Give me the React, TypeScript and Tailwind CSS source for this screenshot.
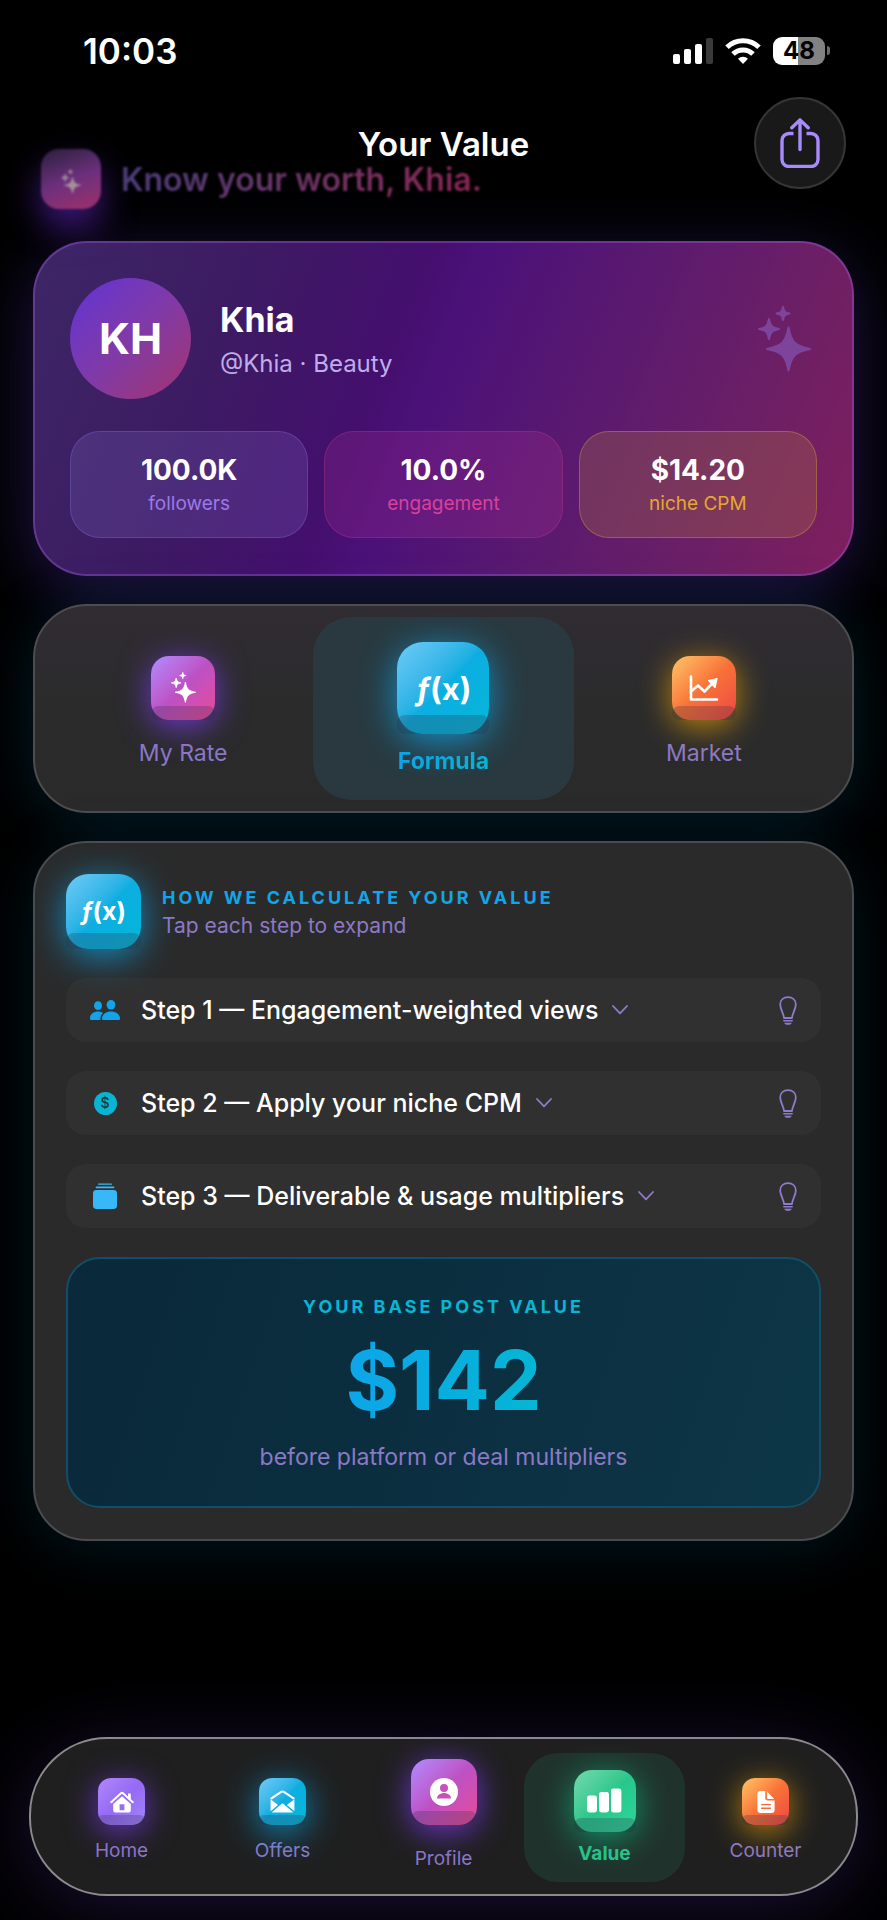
import type { ReactNode } from "react";
import clsx from "clsx";

const star = (x: number, y: number, r: number) =>
  [
    `M${x} ${y - r}`,
    `C${x + r * 0.14} ${y - r * 0.3} ${x + r * 0.3} ${y - r * 0.14} ${x + r} ${y}`,
    `C${x + r * 0.3} ${y + r * 0.14} ${x + r * 0.14} ${y + r * 0.3} ${x} ${y + r}`,
    `C${x - r * 0.14} ${y + r * 0.3} ${x - r * 0.3} ${y + r * 0.14} ${x - r} ${y}`,
    `C${x - r * 0.3} ${y - r * 0.14} ${x - r * 0.14} ${y - r * 0.3} ${x} ${y - r}Z`,
  ].join("");

function Sparkles({ className }: { className?: string }) {
  return (
    <svg viewBox="0 0 53 66" fill="currentColor" stroke="currentColor" strokeWidth="2" strokeLinejoin="round" className={className} aria-hidden="true">
      <path d={star(30.5, 43, 21.5)} />
      <path d={star(11, 23, 10)} />
      <path d={star(25, 7.5, 6.5)} />
    </svg>
  );
}

function TrendIcon() {
  return (
    <svg viewBox="0 0 30 26" className="w-[30px]" fill="none" stroke="white" strokeWidth="2.6" strokeLinecap="round" strokeLinejoin="round" aria-hidden="true">
      <path d="M2 1.5V24.5H28" />
      <path d="M2.5 16L9 10.5L15.5 16.5L24 7.5" />
      <path d="M19.5 5.5L28 3.5L26 12.5Z" fill="white" strokeWidth="1.2" />
    </svg>
  );
}

function HomeIcon() {
  return (
    <svg viewBox="0 0 24 22" className="w-6" aria-hidden="true">
      <path d="M1.2 11.2L11 2.3a1.5 1.5 0 0 1 2 0L22.8 11.2" fill="none" stroke="white" strokeWidth="2" strokeLinecap="round" />
      <path d="M18 2.5h2.8v6l-2.8-2.6z" fill="white" />
      <path
        fillRule="evenodd"
        d="M12 5.2L20.8 13v6.5a2 2 0 0 1-2 2H5.2a2 2 0 0 1-2-2V13zM9.6 13.2v6h4.8v-6z"
        fill="white"
      />
    </svg>
  );
}

function MailIcon() {
  return (
    <svg viewBox="0 0 26 24" className="w-[25px]" aria-hidden="true">
      <path d="M1.5 8.6L11.6 2a2.6 2.6 0 0 1 2.8 0L24.5 8.6" fill="none" stroke="white" strokeWidth="2.2" strokeLinecap="round" />
      <path d="M.6 9.5L8.4 15.5L.6 22zM25.4 9.5L17.6 15.5L25.4 22z" fill="white" />
      <path d="M1.6 23.4L12.2 14.4a1.3 1.3 0 0 1 1.6 0L24.4 23.4z" fill="white" />
    </svg>
  );
}

function PersonIcon() {
  return (
    <svg viewBox="0 0 28 28" className="w-7" aria-hidden="true">
      <circle cx="14" cy="14" r="14" fill="white" />
      <circle cx="14" cy="10" r="4" fill="#c553bb" />
      <path d="M7 20.6c0-3.4 3.4-5.6 7-5.6s7 2.2 7 5.6z" fill="#cb50b4" />
    </svg>
  );
}

function BarsIcon() {
  return (
    <svg viewBox="0 0 35 25" className="w-[35px]" fill="white" aria-hidden="true">
      <rect x="0" y="7.5" width="10" height="17" rx="2.4" />
      <rect x="12" y="4" width="10" height="20.5" rx="2.4" />
      <rect x="24" y="0.5" width="10.4" height="24" rx="2.4" />
    </svg>
  );
}

function DocIcon() {
  return (
    <svg viewBox="0 0 18 22" className="w-[18px]" aria-hidden="true">
      <path d="M3.4 0H8.2V7.2a2.4 2.4 0 0 0 2.4 2.4H17.6V19a3 3 0 0 1-3 3H3.4a3 3 0 0 1-3-3V3a3 3 0 0 1 3-3z" fill="white" />
      <path d="M10 .6L17.2 8H11a1 1 0 0 1-1-1z" fill="white" />
      <path d="M4.6 13.6h8.8M4.6 17.2h8.8" stroke="#f56a3c" strokeWidth="1.4" strokeLinecap="round" />
    </svg>
  );
}

function PeopleIcon() {
  return (
    <svg viewBox="0 0 30 20" className="w-[30px]" fill="#12a3ea" aria-hidden="true">
      <ellipse cx="8" cy="5.7" rx="4" ry="4.4" />
      <path d="M0 18.2c0-4 3.6-6.6 8-6.6 2 0 3.8.6 5 1.4-1.6 1.6-2.6 3.6-2.6 5.8v1.2H1.2C.5 20 0 19.4 0 18.2z" />
      <ellipse cx="21" cy="4.8" rx="4.4" ry="4.8" />
      <path d="M12 18.4c0-4.2 4.2-7 9-7s9 2.8 9 7c0 1-.5 1.6-1.4 1.6H13.4c-.9 0-1.4-.6-1.4-1.6z" />
    </svg>
  );
}

function DollarIcon() {
  return (
    <span className="flex size-[23px] items-center justify-center rounded-full bg-[#08b4d3] text-sm leading-none font-medium text-[#26333a]">
      $
    </span>
  );
}

function StackIcon() {
  return (
    <svg viewBox="0 0 24 26" className="w-6" fill="#38b8f8" aria-hidden="true">
      <rect x="5" y="0.5" width="14" height="1.3" rx=".6" />
      <rect x="2.6" y="3.6" width="18.8" height="1.6" rx=".8" />
      <rect x="0" y="7" width="24" height="19" rx="3.4" />
    </svg>
  );
}

function ChevronIcon() {
  return (
    <svg viewBox="0 0 16 10" className="w-4" fill="none" stroke="#8f7bc9" strokeWidth="1.8" strokeLinecap="round" strokeLinejoin="round" aria-hidden="true">
      <path d="M1 1L8 8.4L15 1" />
    </svg>
  );
}

function BulbIcon() {
  return (
    <svg viewBox="0 0 18 29" className="w-[18px]" fill="none" stroke="#8f7bc9" strokeWidth="1.8" strokeLinejoin="round" aria-hidden="true">
      <path d="M5 22C5 17.8 1.2 13.6 1.2 8.6 1.2 4 4.6 1.2 9 1.2s7.8 2.8 7.8 7.4C16.8 13.6 13 17.8 13 22z" />
      <path d="M4.8 24.8h8.4" strokeWidth="1.5" strokeLinecap="round" />
      <path d="M5.6 27h6.8c-.4 1-1.6 1.5-3.4 1.5s-3-.5-3.4-1.5z" fill="#8f7bc9" strokeWidth=".6" />
    </svg>
  );
}

function FunctionMark({ className }: { className: string }) {
  return (
    <span className={clsx("leading-none font-bold", className)}>
      <i>ƒ</i>(x)
    </span>
  );
}

const tones = {
  pink: "bg-linear-135 from-[#b08bff] via-[#bd50c4] to-[#ea4896] shadow-[0_6px_32px_rgba(124,58,237,0.85)]",
  cyan: "bg-linear-135 from-[#6bcbf9] via-[#0caee1] to-[#06b6d8] shadow-[0_7px_36px_rgba(14,165,233,0.8)]",
  orange: "bg-linear-135 from-[#fcc468] via-[#f87238] to-[#ee4444] shadow-[0_6px_32px_rgba(217,150,10,0.85)]",
  violet: "bg-linear-135 from-[#b088fb] via-[#966af4] to-[#a384fc] shadow-[0_6px_32px_rgba(124,58,237,0.8)]",
  green: "bg-linear-135 from-[#70d9ae] via-[#28c78b] to-[#30d59c] shadow-[0_6px_34px_rgba(16,185,129,0.75)]",
};

type TileProps = { tone: keyof typeof tones; className: string; children: ReactNode };

// Raised square button face with a darker lip along the bottom edge
function Tile({ tone, className, children }: TileProps) {
  return (
    <span className={clsx("relative flex shrink-0 items-center justify-center", tones[tone], className)}>
      <span className="absolute inset-x-0 bottom-0 h-[21%] rounded-lg bg-[#2b2b40]/25" />
      <span className="relative flex items-center justify-center">{children}</span>
    </span>
  );
}

function Stat({ value, label, box, text }: { value: string; label: string; box: string; text: string }) {
  return (
    <div className={clsx("flex flex-1 flex-col items-center rounded-[30px] border py-[19px]", box)}>
      <span className="text-[28px] leading-[38px] font-bold">{value}</span>
      <span className={clsx("pt-px text-[19px] leading-[28px]", text)}>{label}</span>
    </div>
  );
}

function Step({ icon, label }: { icon: ReactNode; label: string }) {
  return (
    <li className="flex h-16 items-center rounded-[20px] bg-[#303030] pr-6 pl-6">
      <button type="button" className="flex flex-1 items-center text-left">
        <span className="mr-[21px] flex w-[30px] justify-center">{icon}</span>
        <span className="text-[25px] leading-8 font-medium">{label}</span>
        <span className="ml-[14px]">
          <ChevronIcon />
        </span>
      </button>
      <button type="button" aria-label="Why this step">
        <BulbIcon />
      </button>
    </li>
  );
}

const inactive = "text-[#8c79c5]";

export default function App() {
  return (
    <div className="flex min-h-screen flex-col overflow-hidden bg-black font-['Inter',sans-serif] text-white">
      {/* Status bar */}
      <div className="flex h-[97px] items-center justify-between pr-[57px] pl-[83px] pt-1">
        <span className="text-[35px] leading-10 font-semibold">10:03</span>
        <div className="flex items-center gap-3">
          <svg viewBox="0 0 40 26" className="w-10" fill="white" aria-hidden="true">
            <rect x="0" y="16" width="7" height="10" rx="2" />
            <rect x="11" y="11" width="7" height="15" rx="2" />
            <rect x="22" y="6" width="7" height="20" rx="2" />
            <rect x="33" y="0" width="7" height="26" rx="2" fill="#3a3a3a" />
          </svg>
          <svg viewBox="0 0 36 26" className="w-9" fill="none" stroke="white" strokeWidth="5" aria-hidden="true">
            <path d="M2 9.2a23 23 0 0 1 32 0" />
            <path d="M8 16a14.4 14.4 0 0 1 20 0" />
            <path d="M18 26l-5-5.2a7.2 7.2 0 0 1 10 0z" fill="white" stroke="none" />
          </svg>
          <div className="flex items-center gap-[2px]">
            <span className="flex h-7 w-[52px] items-center justify-center rounded-[9px] bg-linear-to-r from-white from-48% to-[#828282] to-48% text-[24px] leading-none font-bold text-black">
              48
            </span>
            <span className="h-[9px] w-[3px] rounded-r-full bg-[#6b6b6b]" />
          </div>
        </div>
      </div>

      {/* Title bar */}
      <header className="relative z-10 grid grid-cols-[1fr_auto_1fr] items-center px-[41px]">
        <h1 className="col-start-2 pt-[2px] text-[33px] leading-10 font-semibold">Your Value</h1>
        <button
          type="button"
          aria-label="Share"
          className="flex size-[92px] items-center justify-center justify-self-end rounded-full border-2 border-[#353535] bg-[#191919]"
        >
          <svg viewBox="0 0 40 50" className="w-10" fill="none" stroke="#a78bfa" strokeWidth="3.4" strokeLinecap="round" strokeLinejoin="round" aria-hidden="true">
            <path d="M13.5 15.5H9a7 7 0 0 0-7 7V41.5a7 7 0 0 0 7 7H31a7 7 0 0 0 7-7V22.5a7 7 0 0 0-7-7H26.5" strokeLinecap="butt" />
            <path d="M20 31.5V2M11.8 9.8L20 1.9L28.2 9.8" />
          </svg>
        </button>
      </header>

      {/* Greeting, fading out as it scrolls under the title bar */}
      <div className="-mt-10 flex items-center gap-5 px-[41px] blur-[1px]">
        <span className="flex size-[60px] items-center justify-center rounded-[18px] bg-linear-160 from-[#2a1f3d] via-[#6b2f7c] to-[#a02d6c] pt-1 shadow-[0_18px_34px_rgba(96,40,200,0.6)]">
          <Sparkles className="w-5 text-[#a58f9c]" />
        </span>
        <p className="bg-linear-to-r from-[#4c3c7c] to-[#8c2453] bg-clip-text pt-[2px] text-[32px] leading-[58px] font-semibold text-transparent">
          Know your worth, Khia.
        </p>
      </div>

      <main className="flex flex-col gap-7 px-[33px] pt-8">
        {/* Creator card */}
        <section className="rounded-[54px] border-2 border-[#a05ad6]/40 bg-[linear-gradient(112deg,#3d2765_0%,#3d1a63_25%,#440f6e_42%,#4b1179_48%,#5b1a6f_66%,#6b1f66_82%,#801f5e_100%)] bg-origin-border px-[35px] pt-[35px] pb-9 shadow-[0_16px_64px_rgba(84,56,190,0.38)]">
          <div className="flex items-center">
            <div className="flex size-[121px] items-center justify-center rounded-full bg-linear-135 from-[#6a35c8] from-15% via-[#8039a8] via-50% to-[#9c3479] to-90% text-[43px] font-bold">
              KH
            </div>
            <div className="ml-[29px] flex-1 pt-[6px]">
              <h2 className="text-[34px] leading-[44px] font-bold">Khia</h2>
              <p className="text-[24px] leading-[44px] text-[#bfadea]">@Khia · Beauty</p>
            </div>
            <Sparkles className="mr-[6px] w-[53px] text-[#7e449b]" />
          </div>
          <div className="mt-8 flex gap-4">
            <Stat value="100.0K" label="followers" box="border-[#7d62d0]/40 bg-[#7a62c0]/25" text="text-[#9a7ae8]" />
            <Stat value="10.0%" label="engagement" box="border-[#c43a90]/30 bg-[#c4389a]/20" text="text-[#d8419a]" />
            <Stat value="$14.20" label="niche CPM" box="border-[#c08a40]/50 bg-[#b5803a]/25" text="text-[#e6a82c]" />
          </div>
        </section>

        {/* View switcher */}
        <div
          role="tablist"
          className="grid grid-cols-3 rounded-[54px] border-2 border-[#4d4d50] bg-linear-to-b from-[#302c32] via-[#2b2b2c] to-[#2a2a2a] px-[18px] py-[11px] shadow-[0_8px_56px_rgba(10,110,150,0.26)]"
        >
          <button type="button" role="tab" aria-selected="false" className="flex flex-col items-center justify-center gap-[19px] pt-[5px]">
            <Tile tone="pink" className="size-16 rounded-[18px]">
              <Sparkles className="w-[25px]" />
            </Tile>
            <span className={clsx("text-[23px] leading-7", inactive)}>My Rate</span>
          </button>
          <button type="button" role="tab" aria-selected="true" className="flex h-[183px] flex-col items-center justify-center gap-[13px] rounded-[38px] bg-[#29393f]">
            <Tile tone="cyan" className="size-[92px] rounded-[26px]">
              <FunctionMark className="text-[31px]" />
            </Tile>
            <span className="bg-linear-to-r from-[#0ea5e9] to-[#06b6d4] bg-clip-text text-[23px] leading-7 font-bold text-transparent">Formula</span>
          </button>
          <button type="button" role="tab" aria-selected="false" className="flex flex-col items-center justify-center gap-[19px] pt-[5px]">
            <Tile tone="orange" className="size-16 rounded-[18px]">
              <TrendIcon />
            </Tile>
            <span className={clsx("text-[23px] leading-7", inactive)}>Market</span>
          </button>
        </div>

        {/* Formula breakdown */}
        <section className="rounded-[54px] border-2 border-[#4b4c4e] bg-[#2a2a2a] px-[31px] pt-[31px] pb-[31px] shadow-[0_8px_56px_rgba(10,110,150,0.2)]">
          <div className="flex items-center gap-[21px]">
            <Tile tone="cyan" className="size-[75px] rounded-[22px]">
              <FunctionMark className="text-[25px]" />
            </Tile>
            <div>
              <h2 className="text-[18px] leading-7 font-bold tracking-[3px] text-[#12a5e9] uppercase">How we calculate your value</h2>
              <p className={clsx("text-[21px] leading-7", inactive)}>Tap each step to expand</p>
            </div>
          </div>

          <ul className="mt-[29px] flex flex-col gap-[29px]">
            <Step icon={<PeopleIcon />} label="Step 1 — Engagement-weighted views" />
            <Step icon={<DollarIcon />} label="Step 2 — Apply your niche CPM" />
            <Step icon={<StackIcon />} label="Step 3 — Deliverable & usage multipliers" />
          </ul>

          <div className="mt-[29px] flex flex-col items-center rounded-[34px] border-2 border-[#124e68] bg-[linear-gradient(108deg,#0a293a,#0b2f40_50%,#0d3647)] pt-[34px] pb-[33px]">
            <h3 className="text-[18px] leading-7 font-bold tracking-[3px] text-[#0ab4d2] uppercase">Your base post value</h3>
            <p className="mt-[10px] bg-linear-to-r from-[#0ea5e9] to-[#06b6d4] bg-clip-text text-[82px] leading-[100px] font-bold text-transparent">$142</p>
            <p className={clsx("mt-[10px] text-[23px] leading-8", inactive)}>before platform or deal multipliers</p>
          </div>
        </section>
      </main>

      {/* Bottom tabs */}
      <nav className="mx-[29px] mt-auto mb-6 grid h-[159px] grid-cols-5 items-center rounded-[78px] border-2 border-[#8b8a8d] bg-[#1f1f1f] px-[10px] pt-[2px] text-center text-[19px] leading-6 shadow-[0_10px_72px_rgba(78,50,150,0.35)]">
        <a href="#home" className={clsx("flex flex-col items-center gap-[14px] pt-[6px]", inactive)}>
          <Tile tone="violet" className="size-[47px] rounded-[13px]">
            <HomeIcon />
          </Tile>
          Home
        </a>
        <a href="#offers" className={clsx("flex flex-col items-center gap-[14px] pt-[6px]", inactive)}>
          <Tile tone="cyan" className="size-[47px] rounded-[13px]">
            <MailIcon />
          </Tile>
          Offers
        </a>
        <a href="#profile" className={clsx("flex flex-col items-center gap-[22px] pb-[6px]", inactive)}>
          <Tile tone="pink" className="size-[66px] rounded-[18px]">
            <PersonIcon />
          </Tile>
          Profile
        </a>
        <a href="#value" aria-current="page" className="flex h-[129px] flex-col items-center justify-center gap-[10px] rounded-[34px] bg-[#20322c] font-bold text-[#2bc48b]">
          <Tile tone="green" className="size-[62px] rounded-[18px]">
            <BarsIcon />
          </Tile>
          Value
        </a>
        <a href="#counter" className={clsx("flex flex-col items-center gap-[14px] pt-[6px]", inactive)}>
          <Tile tone="orange" className="size-[47px] rounded-[13px]">
            <DocIcon />
          </Tile>
          Counter
        </a>
      </nav>
    </div>
  );
}
